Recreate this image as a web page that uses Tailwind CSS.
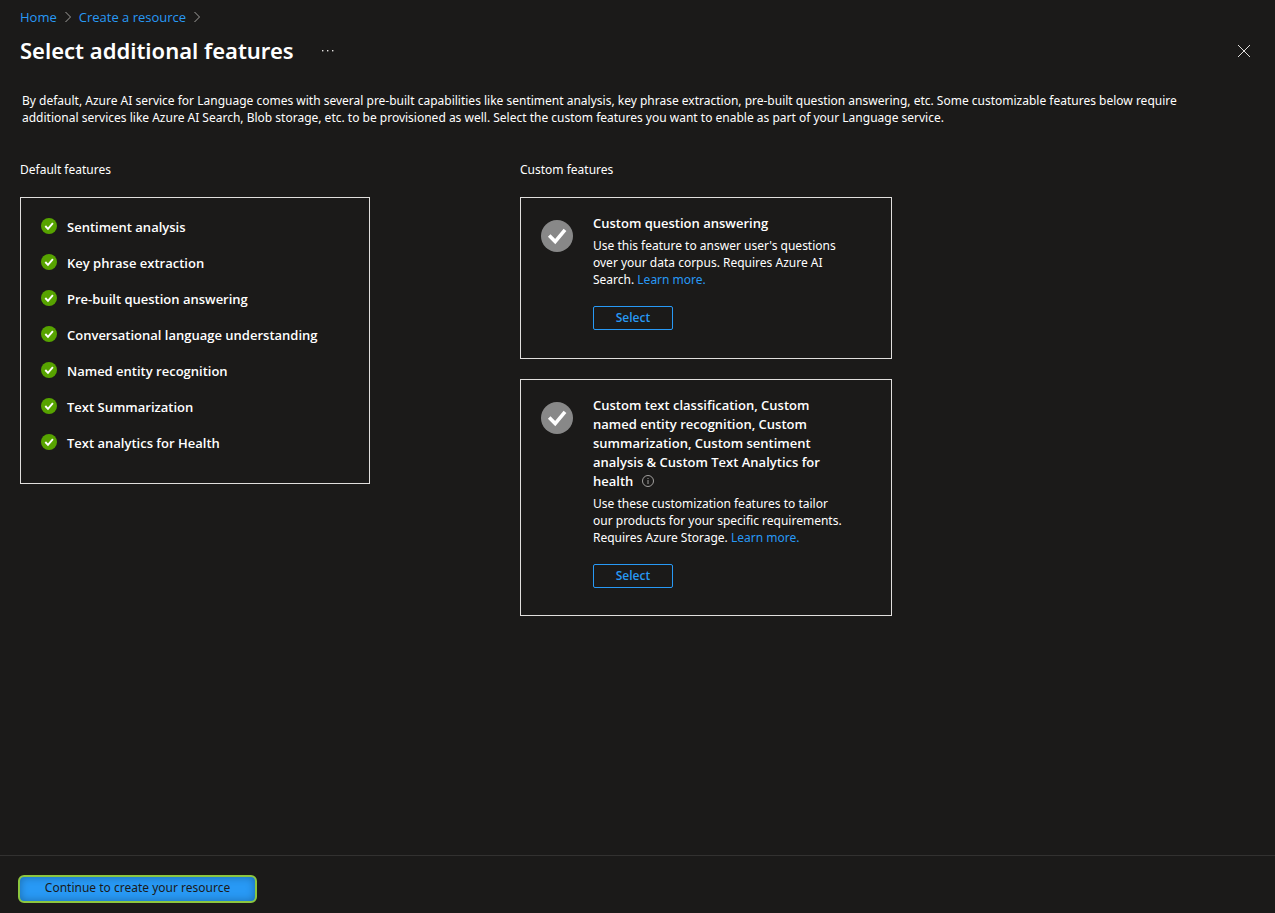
<!DOCTYPE html>
<html lang="en">
<head>
<meta charset="utf-8">
<meta name="viewport" content="width=device-width, initial-scale=1">
<title>Select additional features</title>
<script src="https://cdn.jsdelivr.net/npm/@tailwindcss/browser@4"></script>
</head>
<body class="flex min-h-screen flex-col bg-[#1b1a19] font-['Open_Sans',sans-serif] text-[13px] leading-[17px] text-white">
<svg class="hidden" aria-hidden="true">
  <symbol id="chevron" viewBox="0 0 6 12"><path d="M.5 1l5 5-5 5" fill="none" stroke="#a19f9d"/></symbol>
  <symbol id="check-green" viewBox="0 0 16 16"><circle cx="8" cy="8" r="8" fill="#57a300"/><path d="M4.3 8l2.7 2.9 4.9-5.7" fill="none" stroke="#fff" stroke-width="1.9"/></symbol>
  <symbol id="check-gray" viewBox="0 0 32 32"><circle cx="16" cy="16" r="16" fill="#888"/><path d="M8.2 15.4l6 6.2 9.8-11.8" fill="none" stroke="#fff" stroke-width="3.6"/></symbol>
</svg>

<header class="px-5 pt-2">
  <nav aria-label="Breadcrumb" class="flex items-center gap-2 text-[#2899f5]">
    <a href="#" class="leading-[18px]">Home</a>
    <svg class="h-3 w-1.5"><use href="#chevron"/></svg>
    <a href="#" class="leading-[18px]">Create a resource</a>
    <svg class="h-3 w-1.5"><use href="#chevron"/></svg>
  </nav>
  <div class="mt-2 flex items-center">
    <h1 class="pb-0.5 font-['Noto_Sans',sans-serif] text-[22px] leading-8 font-semibold">Select additional features</h1>
    <button type="button" aria-label="More options" class="ml-6 p-1">
      <svg class="h-1 w-3" viewBox="0 0 12 4" fill="#e1dfdd"><rect y="1" width="1.4" height="1.4"/><rect x="5" y="1" width="1.4" height="1.4"/><rect x="10" y="1" width="1.4" height="1.4"/></svg>
    </button>
    <button type="button" aria-label="Close" class="-mr-px ml-auto p-1">
      <svg class="h-4 w-4" viewBox="0 0 16 16"><path d="M2 2l12 12M14 2L2 14" fill="none" stroke="#e1dfdd"/></svg>
    </button>
  </div>
</header>

<main class="grow px-5 pt-6">
  <p class="mr-10 ml-0.5 font-['Noto_Sans',sans-serif] text-[12px]">By default, Azure AI service for Language comes with several pre-built capabilities like sentiment analysis, key phrase extraction, pre-built question answering, etc. Some customizable features below require additional services like Azure AI Search, Blob storage, etc. to be provisioned as well. Select the custom features you want to enable as part of your Language service.</p>

  <div class="mt-[35px] flex items-start gap-[150px]">
    <section class="w-[350px]">
      <h2 class="font-['Noto_Sans',sans-serif] text-[12px]">Default features</h2>
      <ul class="mt-[19px] flex flex-col gap-[18px] border border-[#e1dfdd] px-5 pt-5 pb-[31px] font-semibold">
        <li class="flex gap-2.5 leading-[18px]"><svg class="h-4 w-4"><use href="#check-green"/></svg>Sentiment analysis</li>
        <li class="flex gap-2.5 leading-[18px]"><svg class="h-4 w-4"><use href="#check-green"/></svg>Key phrase extraction</li>
        <li class="flex gap-2.5 leading-[18px]"><svg class="h-4 w-4"><use href="#check-green"/></svg>Pre-built question answering</li>
        <li class="flex gap-2.5 leading-[18px]"><svg class="h-4 w-4"><use href="#check-green"/></svg>Conversational language understanding</li>
        <li class="flex gap-2.5 leading-[18px]"><svg class="h-4 w-4"><use href="#check-green"/></svg>Named entity recognition</li>
        <li class="flex gap-2.5 leading-[18px]"><svg class="h-4 w-4"><use href="#check-green"/></svg>Text Summarization</li>
        <li class="flex gap-2.5 leading-[18px]"><svg class="h-4 w-4"><use href="#check-green"/></svg>Text analytics for Health</li>
      </ul>
    </section>

    <section class="w-[372px]">
      <h2 class="font-['Noto_Sans',sans-serif] text-[12px]">Custom features</h2>
      <article class="mt-[19px] flex gap-5 border border-[#e1dfdd] pt-4 pr-10 pb-7 pl-5">
        <svg class="mt-1.5 h-8 w-8 shrink-0"><use href="#check-gray"/></svg>
        <div>
          <h3 class="leading-[19px] font-semibold">Custom question answering</h3>
          <p class="mt-1 font-['Noto_Sans',sans-serif] text-[12px]">Use this feature to answer user's questions<br>over your data corpus. Requires Azure AI<br>Search. <a href="#" class="text-[#2899f5]">Learn more.</a></p>
          <button type="button" class="mt-[18px] flex h-6 w-20 justify-center rounded-xs border border-[#2899f5] pt-0.5 text-[12px] font-semibold text-[#2899f5]">Select</button>
        </div>
      </article>
      <article class="mt-5 flex gap-5 border border-[#e1dfdd] pt-4 pr-10 pb-[27px] pl-5">
        <svg class="mt-1.5 h-8 w-8 shrink-0"><use href="#check-gray"/></svg>
        <div>
          <h3 class="leading-[19px] font-semibold">Custom text classification, Custom<br>named entity recognition, Custom<br>summarization, Custom sentiment<br>analysis &amp; Custom Text Analytics for<br><span class="flex items-center gap-2">health
            <svg class="mb-px h-3.5 w-3.5" viewBox="0 0 14 14" role="img" aria-label="More information"><circle cx="7" cy="7" r="5.5" fill="none" stroke="#a19f9d"/><path d="M7 6v4M7 4v1" stroke="#a19f9d"/></svg></span></h3>
          <p class="mt-1 font-['Noto_Sans',sans-serif] text-[12px]">Use these customization features to tailor<br>our products for your specific requirements.<br>Requires Azure Storage. <a href="#" class="text-[#2899f5]">Learn more.</a></p>
          <button type="button" class="mt-[18px] flex h-6 w-20 justify-center rounded-xs border border-[#2899f5] pt-0.5 text-[12px] font-semibold text-[#2899f5]">Select</button>
        </div>
      </article>
    </section>
  </div>
</main>

<footer class="border-t border-[#323130] px-[18px] pt-[19px] pb-2.5">
  <button type="button" class="flex h-7 min-w-[239px] justify-center rounded-md border-2 border-[#8cc63f] bg-[#2899f5] px-5 pt-0.5 font-['Noto_Sans',sans-serif] text-[12px] text-[#1b1a19] shadow-[inset_0_0_8px_rgba(0,0,0,0.3)]">Continue to create your resource</button>
</footer>
</body>
</html>
